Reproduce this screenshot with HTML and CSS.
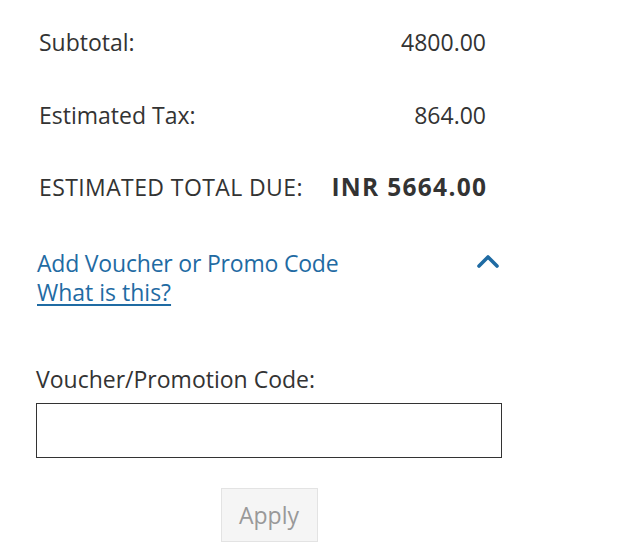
FILE: index.html
```html
<!DOCTYPE html>
<html>
<head>
<meta charset="utf-8">
<link rel="stylesheet" href="styles.css">
</head>
<body>
<div class="panel">
  <div class="summary">
    <div class="row"><span>Subtotal:</span><span>4800.00</span></div>
    <div class="row"><span>Estimated Tax:</span><span>864.00</span></div>
    <div class="row"><span class="caps">ESTIMATED TOTAL DUE:</span><span class="total">INR 5664.00</span></div>
  </div>
  <div class="voucher">
    <div class="voucher-head">
      <div class="voucher-links">
        <span class="voucher-title">Add Voucher or Promo Code</span>
        <a class="what" href="#">What is this?</a>
      </div>
      <svg class="chevron" width="24" height="14" viewBox="0 0 24 14"><path d="M3 12 L12 3 L21 12" fill="none" stroke="#1f6ba3" stroke-width="3.6" stroke-linecap="round" stroke-linejoin="round"/></svg>
    </div>
    <label class="code-label" for="code">Voucher/Promotion Code:</label>
    <input class="code-input" id="code" type="text">
    <div class="actions"><button class="apply" type="button">Apply</button></div>
  </div>
</div>
</body>
</html>
```
FILE: styles.css
```css
html, body {
  margin: 0;
  padding: 0;
  background: #fff;
}
body {
  font-family: "Open Sans", "Noto Sans", sans-serif;
  color: #333;
  font-size: 23px;
}
.panel {
  width: 466px;
  padding: 26px 0 0 36px;
}
.summary {
  display: flex;
  flex-direction: column;
  gap: 40.5px;
  padding: 0 16px 0 3px;
}
.row {
  display: flex;
  justify-content: space-between;
  align-items: baseline;
  line-height: 32px;
}
.caps {
  letter-spacing: 0.4px;
}
.total {
  font-weight: 700;
  font-size: 24.5px;
  letter-spacing: 1.3px;
  margin-right: -1.3px;
}
.voucher {
  margin-top: 46px;
}
.voucher-head {
  display: flex;
  justify-content: space-between;
  align-items: flex-start;
  padding-left: 1px;
}
.voucher-links {
  display: flex;
  flex-direction: column;
  line-height: 29px;
  color: #1f6ba3;
}
.voucher-title {
  letter-spacing: -0.2px;
}
.what {
  color: #1f6ba3;
  text-decoration: underline;
  text-underline-offset: 3px;
  text-decoration-thickness: 2px;
  align-self: flex-start;
}
.chevron {
  margin: 5px 2px 0 0;
}
.code-label {
  display: block;
  margin-top: 56px;
  line-height: 32px;
}
.code-input {
  display: block;
  box-sizing: border-box;
  width: 466px;
  height: 55px;
  margin-top: 8px;
  border: 1px solid #333;
  border-radius: 0;
  padding: 0 10px;
  font: inherit;
  outline: none;
}
.actions {
  display: flex;
  justify-content: center;
  margin-top: 30px;
}
.apply {
  box-sizing: border-box;
  width: 97px;
  height: 54px;
  background: #f5f5f5;
  border: 1px solid #e3e3e3;
  border-radius: 0;
  color: #999;
  font: inherit;
  font-size: 23px;
  padding: 0;
}
```
